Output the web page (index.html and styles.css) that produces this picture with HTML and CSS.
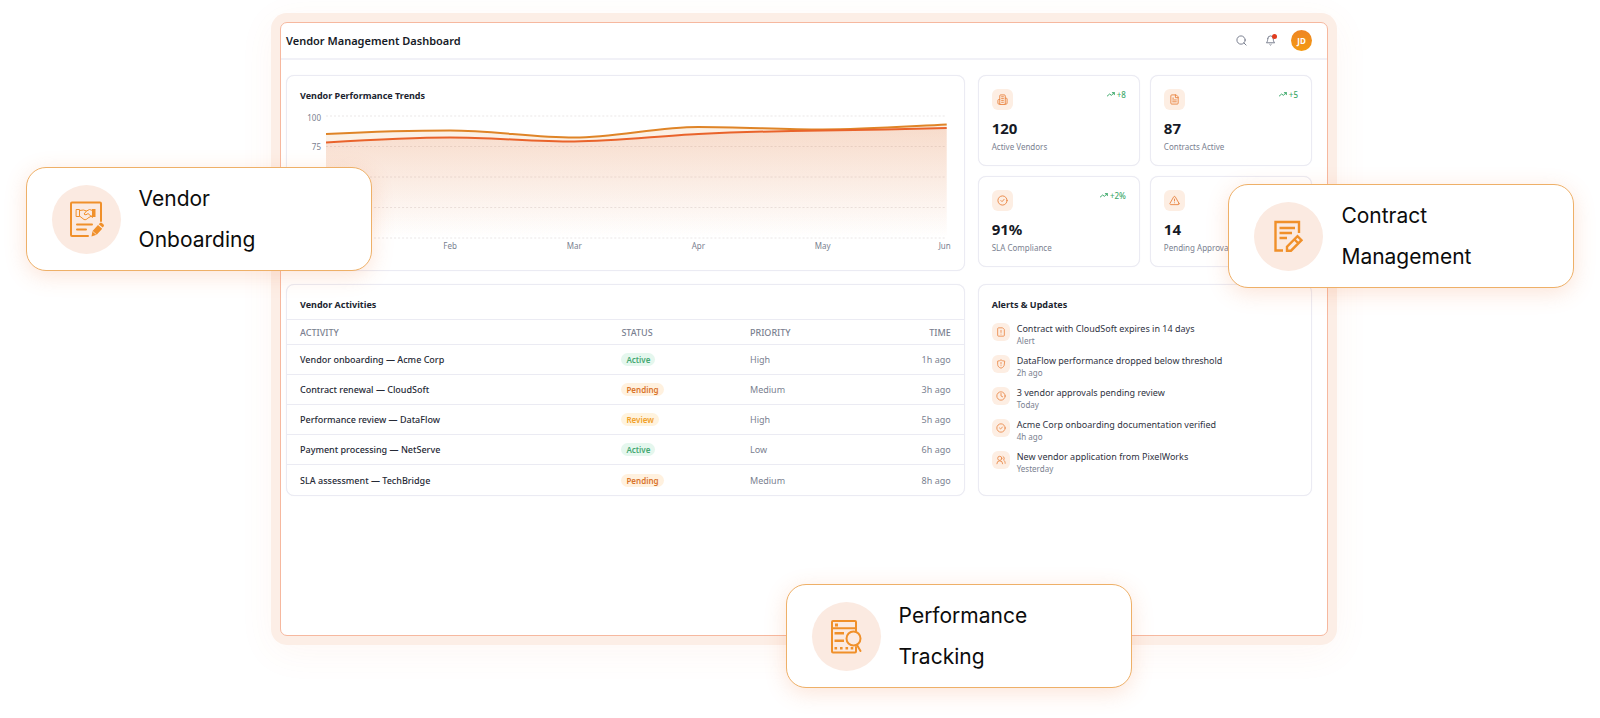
FILE: index.html
```html
<!DOCTYPE html>
<html lang="en">
<head>
    <meta charset="UTF-8" />
    <meta name="viewport" content="width=device-width, initial-scale=1.0" />
    <title>Vendor Management Dashboard</title>
    <link rel="stylesheet" href="styles.css">
</head>
<body>
    <div class="stage">
        <div class="frame">
            <header class="header">
                <h1>Vendor Management Dashboard</h1>
                <div class="header-actions">
                    <button class="icon-btn" type="button" aria-label="Search">
                        <svg class="icon" viewBox="0 0 24 24"><circle cx="11" cy="11" r="9" /><path d="m22 22-4.6-4.6" /></svg>
                    </button>
                    <button class="icon-btn" type="button" aria-label="Notifications">
                        <svg class="icon" viewBox="0 0 24 24"><path d="M6 8a6 6 0 0 1 12 0c0 7 3 9 3 9H3s3-2 3-9" /><path d="M10.3 21a2 2 0 0 0 3.4 0" /></svg>
                        <span class="dot"></span>
                    </button>
                    <button class="avatar" type="button">JD</button>
                </div>
            </header>

            <main class="dashboard">
                <section class="card chart-card">
                    <h2>Vendor Performance Trends</h2>
                    <div class="chart">
                        <div class="y-axis"><span>100</span><span>75</span><span>50</span><span>25</span><span>0</span></div>
                        <div class="plot">
                            <svg viewBox="0 0 620 124" preserveAspectRatio="none">
                                <defs>
                                    <linearGradient id="fillA" x1="0" y1="0" x2="0" y2="1">
                                        <stop offset="0" stop-color="#df8427" stop-opacity=".13" />
                                        <stop offset="1" stop-color="#df8427" stop-opacity="0" />
                                    </linearGradient>
                                    <linearGradient id="fillB" x1="0" y1="0" x2="0" y2="1">
                                        <stop offset="0" stop-color="#e0582a" stop-opacity=".13" />
                                        <stop offset="1" stop-color="#e0582a" stop-opacity="0" />
                                    </linearGradient>
                                </defs>
                                <path class="grid-line" d="M0 1H620M0 31.5H620M0 62H620M0 92.5H620M0 123H620" />
                                <path fill="url(#fillA)" d="M0 19C41 17 83 15.500 124 15.500S207 22.500 248 22.500 331 12 372 12 455 14.500 496 14.500 579 11.500 620 9.500V123H0Z" />
                                <path fill="url(#fillB)" d="M0 27.500C41 25 83 22.500 124 22.500S207 26.500 248 26.500 331 21 372 19 455 16 496 15.500 579 14 620 13V123H0Z" />
                                <path class="line line-a" d="M0 19C41 17 83 15.500 124 15.500S207 22.500 248 22.500 331 12 372 12 455 14.500 496 14.500 579 11.500 620 9.500" />
                                <path class="line line-b" d="M0 27.500C41 25 83 22.500 124 22.500S207 26.500 248 26.500 331 21 372 19 455 16 496 15.500 579 14 620 13" />
                            </svg>
                            <div class="x-axis"><span>Jan</span><span>Feb</span><span>Mar</span><span>Apr</span><span>May</span><span>Jun</span></div>
                        </div>
                    </div>
                </section>

                <section class="stats">
                    <div class="card stat">
                        <div class="stat-top">
                            <span class="tile"><svg class="icon" viewBox="0 0 24 24"><path d="M6 22V4a2 2 0 0 1 2-2h8a2 2 0 0 1 2 2v18Z" /><path d="M6 12H4a2 2 0 0 0-2 2v6a2 2 0 0 0 2 2h2M18 9h2a2 2 0 0 1 2 2v9a2 2 0 0 1-2 2h-2M10 6h4M10 10h4M10 14h4M10 18h4" /></svg></span>
                            <span class="trend"><svg class="icon" viewBox="0 0 24 14"><path d="m1 12 7-6 5 4 9-8M16 2h6v6" /></svg>+8</span>
                        </div>
                        <strong>120</strong>
                        <p>Active Vendors</p>
                    </div>
                    <div class="card stat">
                        <div class="stat-top">
                            <span class="tile"><svg class="icon" viewBox="0 0 24 24"><path d="M15 2H6a2 2 0 0 0-2 2v16a2 2 0 0 0 2 2h12a2 2 0 0 0 2-2V7Z" /><path d="M14 2v6h6M8 9h2M8 13h8M8 17h8" /></svg></span>
                            <span class="trend"><svg class="icon" viewBox="0 0 24 14"><path d="m1 12 7-6 5 4 9-8M16 2h6v6" /></svg>+5</span>
                        </div>
                        <strong>87</strong>
                        <p>Contracts Active</p>
                    </div>
                    <div class="card stat">
                        <div class="stat-top">
                            <span class="tile"><svg class="icon" viewBox="0 0 24 24"><circle cx="12" cy="12" r="10" /><path d="m8.500 12 2.500 2.500 4.500-5" /></svg></span>
                            <span class="trend"><svg class="icon" viewBox="0 0 24 14"><path d="m1 12 7-6 5 4 9-8M16 2h6v6" /></svg>+2%</span>
                        </div>
                        <strong>91%</strong>
                        <p>SLA Compliance</p>
                    </div>
                    <div class="card stat">
                        <div class="stat-top">
                            <span class="tile"><svg class="icon" viewBox="0 0 24 24"><path d="m21.700 18-8-14a2 2 0 0 0-3.500 0l-8 14A2 2 0 0 0 4 21h16a2 2 0 0 0 1.700-3ZM12 9v4M12 17v.1" /></svg></span>
                        </div>
                        <strong>14</strong>
                        <p>Pending Approvals</p>
                    </div>
                </section>

                <section class="card activities">
                    <h2>Vendor Activities</h2>
                    <table>
                        <thead>
                            <tr><th>ACTIVITY</th><th>STATUS</th><th>PRIORITY</th><th>TIME</th></tr>
                        </thead>
                        <tbody>
                            <tr><td>Vendor onboarding — Acme Corp</td><td><span class="badge active">Active</span></td><td>High</td><td>1h ago</td></tr>
                            <tr><td>Contract renewal — CloudSoft</td><td><span class="badge pending">Pending</span></td><td>Medium</td><td>3h ago</td></tr>
                            <tr><td>Performance review — DataFlow</td><td><span class="badge review">Review</span></td><td>High</td><td>5h ago</td></tr>
                            <tr><td>Payment processing — NetServe</td><td><span class="badge active">Active</span></td><td>Low</td><td>6h ago</td></tr>
                            <tr><td>SLA assessment — TechBridge</td><td><span class="badge pending">Pending</span></td><td>Medium</td><td>8h ago</td></tr>
                        </tbody>
                    </table>
                </section>

                <section class="card alerts">
                    <h2>Alerts &amp; Updates</h2>
                    <ul>
                        <li>
                            <span class="tile small"><svg class="icon" viewBox="0 0 24 24"><path d="M15 2H6a2 2 0 0 0-2 2v16a2 2 0 0 0 2 2h12a2 2 0 0 0 2-2V7ZM12 8v5M12 17v.1" /></svg></span>
                            <div><p>Contract with CloudSoft expires in 14 days</p><small>Alert</small></div>
                        </li>
                        <li>
                            <span class="tile small"><svg class="icon" viewBox="0 0 24 24"><path d="M20 13c0 5-3.500 7.500-8 9-4.500-1.500-8-4-8-9V5c3 0 5.500-1 8-3 2.500 2 5 3 8 3ZM12 8v4M12 16v.1" /></svg></span>
                            <div><p>DataFlow performance dropped below threshold</p><small>2h ago</small></div>
                        </li>
                        <li>
                            <span class="tile small"><svg class="icon" viewBox="0 0 24 24"><circle cx="12" cy="12" r="10" /><path d="M12 6v6l4 2" /></svg></span>
                            <div><p>3 vendor approvals pending review</p><small>Today</small></div>
                        </li>
                        <li>
                            <span class="tile small"><svg class="icon" viewBox="0 0 24 24"><circle cx="12" cy="12" r="10" /><path d="m8.500 12 2.500 2.500 4.500-5" /></svg></span>
                            <div><p>Acme Corp onboarding documentation verified</p><small>4h ago</small></div>
                        </li>
                        <li>
                            <span class="tile small"><svg class="icon" viewBox="0 0 24 24"><circle cx="9" cy="8" r="5" /><path d="M2 21a7 7 0 0 1 14 0M17 3.500a5 5 0 0 1 1 8.500c2.500 1.500 4 4 4 8" /></svg></span>
                            <div><p>New vendor application from PixelWorks</p><small>Yesterday</small></div>
                        </li>
                    </ul>
                </section>
            </main>
        </div>

        <div class="feature onboarding">
            <svg class="feature-icon" viewBox="0 0 69 69">
                <path class="o2" d="M49 36V18.500a1 1 0 0 0-1-1H20a1 1 0 0 0-1 1V50a1 1 0 0 0 1 1h16M25 39.500h15M25 44.500h9" />
                <path class="o1" d="M24.500 24.500h3v7h-3zM27.500 25.500l4-.5 3 1 3-1.500 3 1M27.500 31l4.500 3.500c1.500.7 3-.3 4-1.500l4.500-2.500M34.500 26l-2.500 3c1 1.500 3 .5 4-.5l4.500 4" />
                <path class="solid" d="M40 24h3.500v8H40zM39.500 51.500l1-5.500 5.500-6 4.200 3.800-5.500 6ZM46.700 39.300l1.300-1.300q1-.8 1.900 0l1.700 1.600q.8 1 0 1.900l-.9 1.100Z" />
                <path class="cut" d="m40.800 46.500 3.500 3" />
            </svg>
            <p>Vendor<br>Onboarding</p>
        </div>

        <div class="feature contract">
            <svg class="feature-icon" viewBox="0 0 69 69">
                <path class="o3" d="M45 31V20H21.500v28.500H29M25.500 26H41M25.500 31H38M25.500 36H33" />
                <path class="o3" d="M33 48.700v-4l10.500-10.500 4 4L37 48.700ZM40.500 37.500l3.500 3.500" />
            </svg>
            <p>Contract<br>Management</p>
        </div>

        <div class="feature tracking">
            <svg class="feature-icon" viewBox="0 0 69 69">
                <path class="o2" d="M44 29.500V20q0-1-1-1H21q-1 0-1 1v29.500q0 1 1 1h22q1 0 1-1V45M20 26.300h24" />
                <path class="solid" d="M23 21.500h3v3h-3zM22.500 30H32v2.500h-9.500zM22.500 37.500H32V40h-9.500zM22.500 45h2.600v2.600h-2.600zM28 45h2.600v2.600H28zM33.500 45h2.600v2.600h-2.600zM38.700 45h2.600v2.600h-2.600z" />
                <circle class="o2" cx="41.500" cy="36.500" r="7" />
                <path class="o2" d="m45 43 3.500 6" />
            </svg>
            <p>Performance<br>Tracking</p>
        </div>
    </div>
</body>
</html>
```
FILE: styles.css
```css
* {
    box-sizing: border-box;
}
body {
    margin: 0;
    background: #fff;
    color: #20242f;
    font-family: "Noto Sans", sans-serif;
    font-size: 9px;
    line-height: 13px;
}
h1, h2, p, ul {
    margin: 0;
    padding: 0;
}
button {
    padding: 0;
    border: none;
    background: none;
    font-family: inherit;
    cursor: pointer;
}
.icon {
    display: block;
    width: 11px;
    fill: none;
    stroke: currentColor;
    stroke-width: 2;
    stroke-linecap: round;
    stroke-linejoin: round;
}

/* page */
.stage {
    position: relative;
    min-height: 100vh;
    padding: 22px 17% 82px 17.5%;
    overflow: hidden;
}
.frame {
    min-height: calc(100vh - 104px);
    background: #fff;
    border: 1px solid #f6b89f;
    border-radius: 7px;
    box-shadow: 0 0 0 9px #fceee6, 0 8px 36px 9px rgba(235, 120, 60, 0.06);
}
.header {
    display: flex;
    align-items: center;
    justify-content: space-between;
    height: 37px;
    padding: 0 15px 0 5px;
    border-bottom: 2px solid #f1f1f7;
}
h1 {
    color: #161a26;
    font-size: 11px;
    line-height: 16px;
    font-weight: 600;
}
.header-actions {
    display: flex;
    align-items: center;
    gap: 18px;
}
.icon-btn {
    position: relative;
    color: #6f7485;
}
.dot {
    position: absolute;
    top: -1px;
    right: -1px;
    width: 5px;
    height: 5px;
    border-radius: 50%;
    background: #e03c1f;
}
.avatar {
    width: 21px;
    height: 21px;
    margin-left: -3px;
    border-radius: 50%;
    background: linear-gradient(#ee8524, #f49a12);
    color: #fff;
    font-size: 8px;
    font-weight: 700;
}

/* dashboard */
.dashboard {
    display: grid;
    grid-template-columns: 67fr 33fr;
    gap: 13px;
    padding: 15px 15px 15px 5px;
}
.card {
    background: #fff;
    border: 1px solid #ebebf3;
    border-radius: 8px;
    box-shadow: 0 0 1px #ebebf3;
}
h2 {
    font-size: 9px;
    line-height: 13px;
    font-weight: 700;
}
.chart-card {
    min-height: 196px;
    padding: 13px;
}
.chart {
    display: flex;
    gap: 5px;
    margin-top: 10px;
    padding-right: 4px;
    color: #7a7f90;
    font-size: 8px;
    line-height: 12px;
}
.y-axis {
    display: flex;
    flex-direction: column;
    justify-content: space-between;
    width: 21px;
    height: 128px;
    text-align: right;
}
.plot {
    flex: 1;
    padding-top: 3px;
}
.plot svg {
    display: block;
    width: 100%;
    height: 124px;
}
.grid-line {
    stroke: #b4a8a8;
    stroke-opacity: 0.28;
    stroke-dasharray: 2 2;
}
.line {
    fill: none;
    stroke-width: 2;
    vector-effect: non-scaling-stroke;
}
.line-a {
    stroke: #df8427;
}
.line-b {
    stroke: #e9632b;
}
.x-axis {
    display: flex;
    justify-content: space-between;
    margin: 1px -12px 0;
}
.x-axis span {
    width: 24px;
    text-align: center;
}
.x-axis span:last-child {
    padding-right: 4px;
}
.stats {
    display: grid;
    grid-template-columns: 1fr 1fr;
    gap: 10px;
    align-content: start;
}
.stat {
    height: 91px;
    padding: 13px;
}
.stat-top {
    display: flex;
    justify-content: space-between;
    align-items: flex-start;
}
.tile {
    display: flex;
    flex: none;
    align-items: center;
    justify-content: center;
    width: 21px;
    height: 21px;
    border-radius: 6px;
    background: #fdeee3;
    color: #e98643;
}
.tile.small {
    width: 18px;
    height: 18px;
}
.tile.small .icon {
    width: 10px;
}
.trend {
    display: flex;
    align-items: center;
    gap: 2px;
    color: #3faa6c;
    font-size: 8px;
    line-height: 11px;
    font-weight: 500;
}
.trend .icon {
    width: 8px;
    stroke-width: 3;
}
.stat strong {
    display: block;
    margin-top: 8px;
    color: #161a26;
    font-size: 15px;
    line-height: 20px;
    font-weight: 700;
}
.stat p {
    margin-top: 3px;
    color: #7a7f90;
    font-size: 8px;
    line-height: 12px;
}

/* table */
.activities h2 {
    padding: 13px 13px 8px;
    border-bottom: 1px solid #ebebf3;
}
table {
    width: 100%;
    border-collapse: separate;
    border-spacing: 0;
    table-layout: fixed;
}
th, td {
    height: 30px;
    padding: 0 13px;
    border-bottom: 1px solid #ebebf3;
    color: #7a7f90;
    font-weight: 400;
    text-align: left;
}
th {
    height: 25px;
    font-weight: 500;
}
th:nth-child(1) {
    width: 47.5%;
}
th:nth-child(2), th:nth-child(3) {
    width: 19%;
}
th:last-child, td:last-child {
    text-align: right;
}
td:first-child {
    color: #262a36;
    font-weight: 500;
}
tbody tr:last-child td {
    border-bottom: none;
}
.badge {
    display: inline-block;
    padding: 0 5px;
    border-radius: 7px;
    font-size: 8px;
    line-height: 13px;
    font-weight: 600;
}
.active {
    background: #e5f7ee;
    color: #45a872;
}
.pending {
    background: #fff1df;
    color: #d9732b;
}
.review {
    background: #fff3de;
    color: #f0a028;
}

/* alerts */
.alerts {
    padding: 13px;
}
.alerts ul {
    display: grid;
    gap: 7px;
    margin-top: 11px;
    list-style: none;
}
.alerts li {
    display: flex;
    gap: 7px;
}
.alerts li .tile {
    margin-top: 1px;
}
.alerts li p {
    color: #2f333f;
}
.alerts small {
    display: block;
    color: #7a7f90;
    font-size: 8px;
    line-height: 12px;
}

/* floating feature cards */
.feature {
    position: absolute;
    display: flex;
    align-items: center;
    gap: 18px;
    width: 346px;
    height: 104px;
    padding: 0 25px;
    background: #fff;
    border: 1px solid #eeb068;
    border-radius: 20px;
    box-shadow: 0 5px 22px rgba(238, 120, 60, 0.2);
    color: #0c0c0c;
    font-family: Inter, sans-serif;
    font-size: 21px;
    line-height: 41px;
}
.onboarding {
    top: 167px;
    left: 1.6%;
}
.contract {
    top: 184px;
    right: 1.6%;
}
.tracking {
    top: 584px;
    left: 49.1%;
}
.feature-icon {
    flex: none;
    width: 69px;
    height: 69px;
    border-radius: 50%;
    background: #fbeae1;
    fill: none;
}
.o1, .o2, .o3, .cut {
    stroke: #f0902a;
    stroke-linejoin: round;
    stroke-linecap: round;
}
.o1 {
    stroke-width: 1;
}
.o2 {
    stroke-width: 2;
}
.o3 {
    stroke-width: 2.4;
    stroke-linejoin: miter;
    stroke-linecap: butt;
}
.cut {
    stroke: #fbeae1;
    stroke-width: 0.8;
}
.solid {
    fill: #f0902a;
}
```
